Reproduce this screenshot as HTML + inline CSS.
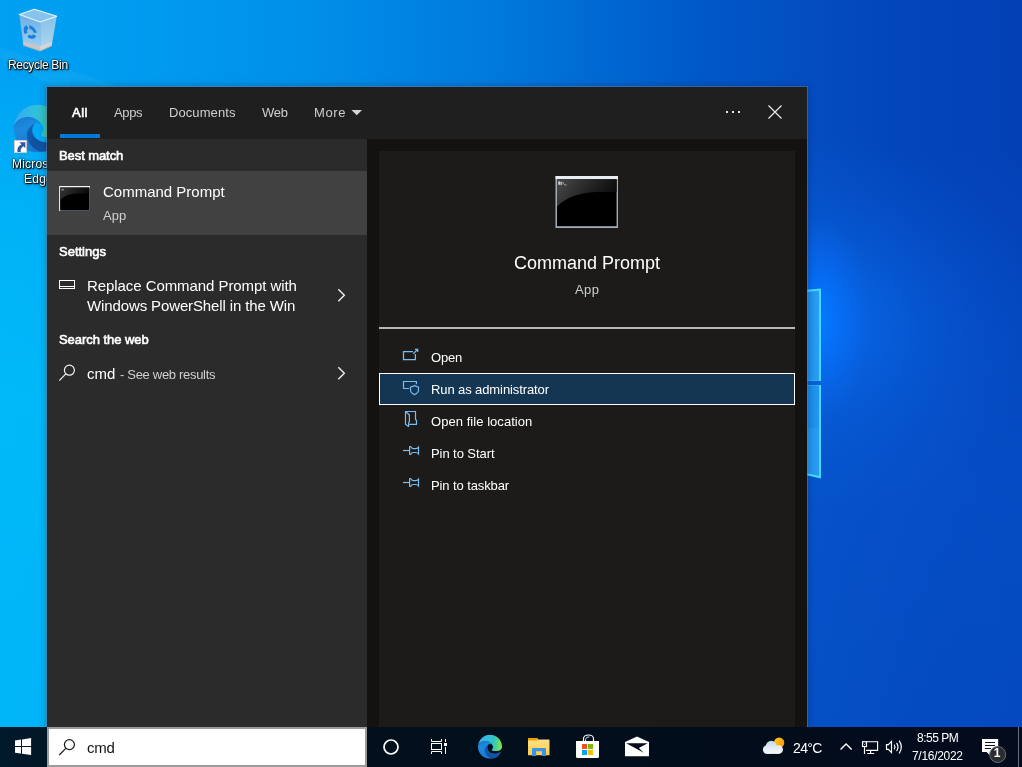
<!DOCTYPE html>
<html lang="en">
<head>
<meta charset="utf-8">
<title>Search - cmd</title>
<style>
*{box-sizing:border-box;margin:0;padding:0}
html,body{width:1022px;height:767px;overflow:hidden;background:#0563d6}
body{font-family:"Liberation Sans",sans-serif;color:#fff;position:relative;font-size:13px}
.a{position:absolute}
svg{position:absolute;overflow:visible}
.t{position:absolute;will-change:transform;white-space:nowrap;line-height:16px;font-size:13px;color:#fff}
.b{font-weight:bold}
.sb{font-weight:normal;-webkit-text-stroke:.6px #fff}
.g{color:#cfcfcf}
.f15{font-size:15px;line-height:20px}
/* wallpaper */
#wall{left:0;top:0;width:1022px;height:727px;
 background:
  radial-gradient(ellipse 50px 100px at 820px 318px, rgba(4,122,255,.95) 0%, rgba(4,116,255,.72) 30%, rgba(6,112,255,.36) 60%, rgba(10,112,255,0) 100%),
  radial-gradient(ellipse 225px 190px at 814px 325px, rgba(10,114,246,.8) 0%, rgba(10,114,246,.52) 22%, rgba(10,114,246,.26) 48%, rgba(10,114,246,.1) 72%, rgba(12,116,246,0) 100%),
  linear-gradient(180deg, rgba(0,200,255,0) 0px, rgba(0,200,255,0) 50px, rgba(0,205,255,.38) 200px, rgba(0,210,255,.5) 400px, rgba(0,205,255,.46) 727px) 0 0/70px 727px no-repeat,
  linear-gradient(180deg, rgba(8,88,210,0) 0px, rgba(8,88,210,0) 150px, rgba(8,88,210,.32) 330px, rgba(8,88,210,.5) 480px, rgba(6,84,202,.45) 727px) 807px 0/215px 727px no-repeat,
  linear-gradient(90deg,#00a0f2 0px,#009cf0 124px,#0090ea 304px,#0078dc 504px,#0058c8 704px,#044cc0 820px,#0345bb 904px,#0340b6 1022px);}
/* desktop labels */
.dl{position:absolute;will-change:transform;color:#fff;font-size:12px;line-height:15px;white-space:nowrap;letter-spacing:-.33px;
 text-shadow:1px 1px 1px rgba(0,0,0,1),0 0 2px rgba(0,0,0,.9),0 1px 3px rgba(0,0,0,.8),0 0 1px rgba(0,0,0,.7)}
/* panel */
#panel{left:47px;top:87px;width:760px;height:640px;background:#131211;box-shadow:0 0 0 1px rgba(110,125,150,.5),0 0 7px 1px rgba(0,10,40,.28)}
#hdr{left:47px;top:87px;width:760px;height:52px;background:#1f1f1f}
#uline{left:60px;top:134px;width:40px;height:4px;background:#0078d7}
#left{left:47px;top:139px;width:320px;height:588px;background:#2b2b2b}
#sel{left:47px;top:171px;width:320px;height:64px;background:#414141}
#card{left:379px;top:151px;width:416px;height:576px;background:#1c1b1a}
#divider{left:379px;top:327px;width:416px;height:2px;background:#b6b6b6}
#hi{left:379px;top:373px;width:416px;height:32px;background:#143652;border:1px solid #fff}
/* taskbar */
#tb{left:0;top:727px;width:1022px;height:40px;background:linear-gradient(90deg,#00192b 0px,#011726 47px,#02101c 400px,#020c1b 800px,#030b1d 1022px)}
#sbox{left:47px;top:727px;width:320px;height:40px;background:#fff;border:2px solid #9b9b9b}
</style>
</head>
<body>
<!-- ===== wallpaper ===== -->
<div class="a" id="wall"></div>
<svg style="left:0;top:0" width="1022" height="767" viewBox="0 0 1022 767" fill="none">
  <defs>
    <linearGradient id="pn1" x1="0" y1="0" x2="1" y2="0"><stop offset="0" stop-color="#1c8eec"/><stop offset="1" stop-color="#2aa3f4"/></linearGradient>
    <linearGradient id="pn2" x1="0" y1="0" x2="1" y2="0"><stop offset="0" stop-color="#1888e8"/><stop offset="1" stop-color="#249af0"/></linearGradient>
  </defs>
  <path d="M0 47 L130 90 L60 90 L0 58 Z" fill="#5fd0ff" opacity=".1"/>
  <path d="M807 290.6 L821 289 V381.4 H807 Z" fill="url(#pn1)"/>
  <path d="M807 384.6 H821 V478 L807 474.8 Z" fill="url(#pn2)"/>
  <path d="M807 428 H821 V478 L807 474.8 Z" fill="#3aa8f6" opacity=".35"/>
  <path d="M807 381 H821.5 V385 H807 Z" fill="#0a62d4"/>
  <path d="M807 380.5 H819 M807 385.5 H819" stroke="#3cb2f6" stroke-width="1" opacity=".6"/>
  <path d="M807 290.8 L820 289.5 V381" stroke="#46dcff" stroke-width="1.9"/>
  <path d="M820 385 V477.3 L807 474.3" stroke="#46dcff" stroke-width="1.9"/>
</svg>

<!-- ===== desktop icons ===== -->
<svg id="ic-desk" style="left:0;top:0" width="1022" height="767" viewBox="0 0 1022 767" fill="none">
  <defs>
    <linearGradient id="eg" gradientUnits="userSpaceOnUse" x1="0" y1="14" x2="48" y2="20">
      <stop offset="0" stop-color="#3aa6ec"/><stop offset="0.35" stop-color="#31bce4"/><stop offset="0.62" stop-color="#2fc4c2"/><stop offset="0.82" stop-color="#58d584"/><stop offset="1" stop-color="#86ea48"/>
    </linearGradient>
    <linearGradient id="ew" gradientUnits="userSpaceOnUse" x1="6" y1="12" x2="20" y2="48">
      <stop offset="0" stop-color="#1878d2"/><stop offset="0.3" stop-color="#1d8ade"/><stop offset="1" stop-color="#1776d0"/>
    </linearGradient>
    <linearGradient id="ed" gradientUnits="userSpaceOnUse" x1="16" y1="20" x2="40" y2="46">
      <stop offset="0" stop-color="#1560b8"/><stop offset="0.5" stop-color="#10509f"/><stop offset="1" stop-color="#1358ac"/>
    </linearGradient>
    <symbol id="edge" viewBox="0 0 48 48">
      <path d="M0.4 20.5 C3 15.5 9 11.8 15.3 12.2 C20 12.6 23.5 14.5 26.3 17.5 L26.3 19.4 C24 18.6 22.5 18.6 21.2 19 C19.5 20.5 18.5 23 18.5 26 C18.5 32 25 38 33 38 C38 38 42 36.5 45.5 34 C42 42.5 33.5 48 24 48 C10.7 48 0 37.3 0 24 C0 22.8 0.15 21.6 0.4 20.5 Z" fill="url(#ew)"/>
      <path d="M21.2 19 C16 22 12.5 27 13.3 31.5 C14 38 18.5 44 25 46.6 C33 49 41.5 45 45.5 34 C42 36.5 38 38 33 38 C25 38 18.5 32 18.5 26 C18.5 22.5 20 20 21.2 19 Z" fill="url(#ed)"/>
      <path d="M0.4 20.5 C2 9 12 0 24 0 C37.3 0 48 10.7 48 24 C48 29 44 32.5 38 32.5 L31 32.5 C28.5 32.5 27.3 30.8 28.3 28.8 C29.5 26.5 30.5 25.5 30 23.8 C29 20.5 27.5 18.5 26.3 17.5 C23.5 14.5 20 12.6 15.3 12.2 C9 11.8 3 15.5 0.4 20.5 Z" fill="url(#eg)"/>
    </symbol>
    <linearGradient id="rbL" x1="0" y1="0" x2="0" y2="1"><stop offset="0" stop-color="#6ab0e4"/><stop offset="1" stop-color="#a4d1f0"/></linearGradient>
    <linearGradient id="rbR" x1="0" y1="0" x2="0" y2="1"><stop offset="0" stop-color="#86c1ea"/><stop offset="1" stop-color="#b1d7f1"/></linearGradient>
  </defs>
  <!-- recycle bin -->
  <path d="M19.3 14.6 L34.4 9.2 L56.8 16.2 L40.2 21.9 Z" fill="#86c3ed"/>
  <path d="M19.3 14.6 L40.2 21.9 L40.2 50.9 L23.5 45.4 Z" fill="url(#rbL)"/>
  <path d="M40.2 21.9 L56.8 16.2 L51.6 45.9 L40.2 50.9 Z" fill="url(#rbR)"/>
  <path d="M22.9 41.3 L40.2 46.1 L40.2 50.9 L23.5 45.4 Z" fill="#c6c6cb"/>
  <path d="M40.2 46.1 L52.3 41.6 L51.6 45.9 L40.2 50.9 Z" fill="#d4d5da"/>
  <path d="M23.5 45.4 L40.2 50.9 L51.6 45.9" stroke="#b5aaa6" stroke-width=".9"/>
  <path d="M19.3 14.6 L34.4 9.2 L56.8 16.2 L40.2 21.9 Z" stroke="#e9f6ff" stroke-width="1.1" stroke-linejoin="round"/>
  <g transform="translate(30.2 32) skewY(17)">
    <circle cx="0" cy="0" r="4.9" stroke="#1b80dc" stroke-width="3.3" stroke-dasharray="7.6 2.66" transform="rotate(-100)"/>
  </g>
  <!-- edge desktop icon -->
  <use href="#edge" x="13.8" y="104.7" width="47.6" height="47.6"/>
  <rect x="14.4" y="140.4" width="12.2" height="12.2" fill="#fff" stroke="#d6cbbf" stroke-width=".8"/>
  <path d="M25.3 142.3 H19.4 L21.5 144.4 C18.2 145.8 16.8 148.8 17.5 151.9 L20.7 151.9 C20.3 149.6 21.2 147.8 23.4 146.3 L25.3 148.2 Z" fill="#2d55a4"/>
</svg>
<div id="desk">
<div class="dl" style="left:8px;top:58px">Recycle Bin</div>
<div class="dl" style="left:12px;top:157px;letter-spacing:.2px">Microsoft</div>
<div class="dl" style="left:24px;top:172px;letter-spacing:.25px">Edge</div>
</div>

<!-- ===== search panel ===== -->
<div class="a" id="panel"></div>
<div class="a" id="hdr"></div>
<div class="a" id="uline"></div>
<div class="a" id="left"></div>
<div class="a" id="sel"></div>
<div class="a" id="card"></div>
<div class="a" id="divider"></div>
<div class="a" id="hi"></div>

<div id="tabs">
<div class="t sb" style="left:72px;top:105px;letter-spacing:.5px">All</div>
<div class="t g" style="left:114px;top:105px;letter-spacing:-.34px">Apps</div>
<div class="t g" style="left:169px;top:105px;letter-spacing:.08px">Documents</div>
<div class="t g" style="left:262px;top:105px;letter-spacing:-.23px">Web</div>
<div class="t g" style="left:314px;top:105px;letter-spacing:.6px">More</div>
</div>

<div id="results">
<div class="t sb" style="left:59px;top:148px;letter-spacing:-.08px">Best match</div>
<div class="t f15" style="left:103px;top:182px">Command Prompt</div>
<div class="t g" style="left:103px;top:208px">App</div>
<div class="t sb" style="left:59px;top:244px;letter-spacing:0px">Settings</div>
<div class="t f15" style="left:87px;top:276px;letter-spacing:-.07px">Replace Command Prompt with</div>
<div class="t f15" style="left:87px;top:296px;letter-spacing:-.12px">Windows PowerShell in the Win</div>
<div class="t sb" style="left:59px;top:332px;letter-spacing:-.05px">Search the web</div>
<div class="t f15" style="left:87px;top:364px">cmd</div>
<div class="t g" style="left:120px;top:367px;letter-spacing:-.31px">- See web results</div>
</div>

<div id="preview">
<div class="t" style="left:514px;top:252px;font-size:18px;line-height:22px">Command Prompt</div>
<div class="t g" style="left:575px;top:282px;letter-spacing:.4px">App</div>
<div class="t" style="left:431px;top:350px;letter-spacing:-.19px">Open</div>
<div class="t" style="left:431px;top:382px;letter-spacing:-.1px">Run as administrator</div>
<div class="t" style="left:431px;top:414px;letter-spacing:.05px">Open file location</div>
<div class="t" style="left:431px;top:446px;letter-spacing:-.07px">Pin to Start</div>
<div class="t" style="left:431px;top:478px;letter-spacing:-.1px">Pin to taskbar</div>
</div>


<!-- ===== panel icons ===== -->
<svg id="ic-panel" style="left:0;top:0" width="1022" height="767" viewBox="0 0 1022 767" fill="none">
  <defs>
    <linearGradient id="gloss" x1="0" y1="0" x2="1" y2="0.35">
      <stop offset="0" stop-color="#4a4a4a"/><stop offset="0.55" stop-color="#262626"/><stop offset="1" stop-color="#0c0c0c"/>
    </linearGradient>
  </defs>
  <!-- More caret -->
  <path d="M351.5 110 H362 L356.75 115.3 Z" fill="#d6d6d6"/>
  <!-- ellipsis -->
  <rect x="726" y="111" width="2" height="2" fill="#e4e4e4"/><rect x="732" y="111" width="2" height="2" fill="#e4e4e4"/><rect x="738" y="111" width="2" height="2" fill="#e4e4e4"/>
  <!-- close -->
  <path d="M768.5 105.5 L781.5 118.5 M781.5 105.5 L768.5 118.5" stroke="#e6e6e6" stroke-width="1.3"/>
  <!-- small cmd icon -->
  <rect x="59" y="186" width="31" height="25" fill="#4b5462"/>
  <rect x="59" y="186" width="31" height="1.6" fill="#f2f4f6"/>
  <rect x="59" y="186" width="1.2" height="25" fill="#dfe3ea"/>
  <rect x="60.2" y="187.6" width="28.8" height="22.4" fill="#000"/>
  <path d="M60.2 187.6 H89 V193.6 H76 C69 194 64 196.5 60.2 200 Z" fill="url(#gloss)" opacity=".75"/>
  <rect x="61.5" y="189.3" width="2.2" height="1" fill="#bbb"/>
  <!-- settings item icon -->
  <rect x="59.5" y="280.5" width="15" height="8" stroke="#fff" stroke-width="1"/>
  <path d="M60 286.5 H74" stroke="#fff" stroke-width="1"/>
  <!-- web search icon -->
  <circle cx="69.4" cy="370.2" r="5" stroke="#f2f2f2" stroke-width="1.2"/>
  <path d="M65.8 373.9 L59.3 380.6" stroke="#f2f2f2" stroke-width="1.2"/>
  <!-- chevrons -->
  <path d="M338.3 289.3 L344.3 295.3 L338.3 301.3" stroke="#e8e8e8" stroke-width="1.5"/>
  <path d="M338.3 367.3 L344.3 373.3 L338.3 379.3" stroke="#e8e8e8" stroke-width="1.5"/>
  <!-- large cmd icon -->
  <rect x="555.5" y="176" width="62.5" height="52" fill="#a2abba"/>
  <rect x="555.5" y="176" width="62.5" height="3.2" fill="#e9edf2"/>
  <rect x="557" y="179.3" width="59.6" height="46.9" fill="#000"/>
  <path d="M557 179.3 H616.6 V192 H596 C580 192.5 566 197.5 557 206.5 Z" fill="url(#gloss)"/>
  <path d="M558.6 181.8 h1.4 v2.6 h-1.4 z M560.8 182.4 h.8 v.8 h-.8z M560.8 183.8 h.8 v.8 h-.8z M562.2 181.8 l2 2.8 M564.4 184.9 h2.2" stroke="#cfcfcf" stroke-width=".7" fill="#cfcfcf"/>
  <!-- action: open -->
  <g stroke="#78bdf2" stroke-width="1.25">
    <path d="M413 351.5 H403.5 V359.5 H415.4 V354"/>
    <path d="M413.3 353.7 L417.6 349.4"/>
    <path d="M415 349.4 H417.7 V352" />
  </g>
  <!-- action: run as admin -->
  <g stroke="#78bdf2" stroke-width="1.2">
    <path d="M409 388.5 H403.5 V381.5 H416.4 V384.3"/>
    <path d="M414.5 385.5 C413 386.6 411.8 387 410.5 387 V390 C410.5 392.2 412.3 393.6 414.5 394.6 C416.7 393.6 418.5 392.2 418.5 390 V387 C417.2 387 416 386.6 414.5 385.5 Z"/>
  </g>
  <!-- action: open file location -->
  <g stroke="#78bdf2" stroke-width="1.2" stroke-linejoin="round">
    <path d="M405.5 411.5 H415.5 V419.3 L416.5 420.5 V424.4 H409.3"/>
    <path d="M405.5 411.5 L409.4 415 V421.3 L408.6 422.8 V426.4 L405.5 424.3 Z"/>
  </g>
  <!-- action: pin x2 -->
  <g id="pin" stroke="#78bdf2" stroke-width="1.2">
    <path d="M403 450.5 H409.5"/>
    <path d="M409.6 446.3 V454.8"/>
    <path d="M409.6 446.6 H410.6 Q411.6 448.6 413.2 448.6 H415.8 Q417.4 448.6 418.5 447.2 V453.9 Q417.4 452.5 415.8 452.5 H413.2 Q411.6 452.5 410.6 454.5 H409.6"/>
  </g>
  <use href="#pin" transform="translate(0,32)"/>
</svg>

<!-- ===== taskbar ===== -->
<div class="a" id="tb"></div>
<div class="a" id="sbox"></div>
<div class="t f15" style="left:87px;top:738px;color:#111;letter-spacing:-.3px">cmd</div>
<div class="t" style="left:793px;top:739px;font-size:14px;line-height:18px;letter-spacing:-.6px">24°C</div>
<div class="t" style="left:917px;top:731px;font-size:12px;line-height:15px;letter-spacing:-.47px">8:55 PM</div>
<div class="t" style="left:912px;top:749px;font-size:12px;line-height:15px;letter-spacing:-.3px">7/16/2022</div>

<svg id="ic-tb" style="left:0;top:0" width="1022" height="767" viewBox="0 0 1022 767" fill="none">
  <defs>
    <linearGradient id="sun" x1="0" y1="0" x2="1" y2="1"><stop offset="0" stop-color="#ffd21a"/><stop offset="1" stop-color="#ff8a00"/></linearGradient>
    <linearGradient id="cloud" gradientUnits="userSpaceOnUse" x1="0" y1="740" x2="0" y2="754"><stop offset="0" stop-color="#c2d8f2"/><stop offset="0.6" stop-color="#e6eef8"/><stop offset="1" stop-color="#f6f8fb"/></linearGradient>
    <linearGradient id="fold" x1="0" y1="0" x2="0" y2="1"><stop offset="0" stop-color="#ffe08a"/><stop offset="1" stop-color="#ffcf4a"/></linearGradient>
  </defs>
  <!-- start -->
  <g fill="#fff">
    <path d="M15 740.4 L21 739.6 V746 H15 Z"/>
    <path d="M22 739.4 L31.1 738.1 V746 H22 Z"/>
    <path d="M15 747 H21 V753.6 L15 752.8 Z"/>
    <path d="M22 747 H31.1 V755 L22 753.8 Z"/>
  </g>
  <!-- search glass -->
  <circle cx="69.4" cy="744.6" r="5" stroke="#1a1a1a" stroke-width="1.2"/>
  <path d="M65.8 748.3 L59.3 755" stroke="#1a1a1a" stroke-width="1.2"/>
  <!-- cortana -->
  <circle cx="391" cy="747" r="7" stroke="#fff" stroke-width="1.7"/>
  <!-- task view -->
  <g stroke="#fff" stroke-width="1">
    <rect x="431.5" y="743.5" width="10" height="6"/>
    <path d="M431.5 739 V741.5 H441.5 V739"/>
    <path d="M431.5 754 V751.5 H441.5 V754"/>
    <path d="M445.5 739 V742 M445.5 747 V754"/>
  </g>
  <rect x="444" y="743" width="3" height="3" fill="#fff"/>
  <!-- edge -->
  <use href="#edge" x="478" y="734.8" width="24" height="24"/>
  <!-- explorer -->
  <path d="M528 738.6 Q528 738 528.6 738 H537 L538.2 739.4 H549 Q549.5 739.4 549.5 740 V755.2 H528 Z" fill="url(#fold)"/>
  <path d="M528 738.6 Q528 738 528.6 738 H537 Q537.6 738 537.6 738.8 V740.6 H528 Z" fill="#e9a206"/>
  <path d="M532 749 Q532 748 533 748 H545 Q546 748 546 749 V756 H542 V751.2 H536.1 V756 H532 Z" fill="#3b93e4"/>
  <!-- store -->
  <path d="M583.5 741 V738.6 A5 3.6 0 0 1 593.5 738.6 V741" stroke="#fff" stroke-width="1.2"/>
  <path d="M585.6 741 V739.4 A3.2 2.6 0 0 1 589.4 737" stroke="#fff" stroke-width=".9"/>
  <path d="M576 741 H599 V756.4 Q599 758 597.4 758 H577.6 Q576 758 576 756.4 Z" fill="#fff"/>
  <rect x="582" y="744" width="5" height="5" fill="#f25022"/><rect x="588" y="744" width="5" height="5" fill="#7fba00"/>
  <rect x="582" y="750" width="5" height="5" fill="#00a4ef"/><rect x="588" y="750" width="5" height="5" fill="#ffb900"/>
  <!-- mail -->
  <path d="M625 742 L637 736.6 L649 742 V756.2 H625 Z" fill="#fff"/>
  <path d="M626.2 743.2 H647.7 L638.9 748.1 L643.7 752.8 Z" fill="#030d1c"/>
  <!-- weather -->
  <circle cx="779.1" cy="742.7" r="5.2" fill="url(#sun)"/>
  <g fill="url(#cloud)"><circle cx="771.3" cy="746.3" r="5.5"/><circle cx="767.2" cy="749.6" r="4.3"/><circle cx="778.6" cy="749.5" r="4.4"/><rect x="767.2" y="748" width="11.4" height="5.9"/></g>
  <!-- tray chevron -->
  <path d="M840.5 749.6 L846.1 744 L851.7 749.6" stroke="#fff" stroke-width="1.35"/>
  <!-- network -->
  <g stroke="#fff" stroke-width="1.15">
    <path d="M866.8 741.7 H877.6 V750.3 H866"/>
    <path d="M870.6 750.5 V753.4 M867.2 753.5 H874.2"/>
    <rect x="862.5" y="741.7" width="4" height="4.8"/>
    <path d="M864.5 746.5 V754"/>
    <path d="M863.6 743.6 L864.5 744.5 L865.4 743.6" stroke-width=".8"/>
  </g>
  <!-- volume -->
  <g stroke="#fff" stroke-width="1.2">
    <path d="M886.5 744.6 H888.4 L891.5 741.4 V752.6 L888.4 749.4 H886.5 Z"/>
    <path d="M894.2 744.6 Q895.8 747 894.2 749.4"/>
    <path d="M896.6 742.8 Q899.4 747 896.6 751.2"/>
    <path d="M899.2 740.6 Q903.4 747 899.2 753.4"/>
  </g>
  <!-- notifications -->
  <path d="M982 739 H998.2 V752 H989.8 L989.8 755.2 L986.6 752 H982 Z" fill="#fff"/>
  <path d="M985 742.5 H995 M985 745.5 H995 M985 748.5 H991" stroke="#0a1424" stroke-width="1"/>
  <circle cx="997.7" cy="754.5" r="8" fill="#2b2c30" stroke="#74787e" stroke-width=".9"/>
</svg>
<div class="t b" style="left:993px;top:746px;font-size:12px;line-height:14px;width:8px;text-align:center">1</div>
<div class="a" style="left:1018px;top:727px;width:1px;height:40px;background:#6a6f78"></div>
</body>
</html>
